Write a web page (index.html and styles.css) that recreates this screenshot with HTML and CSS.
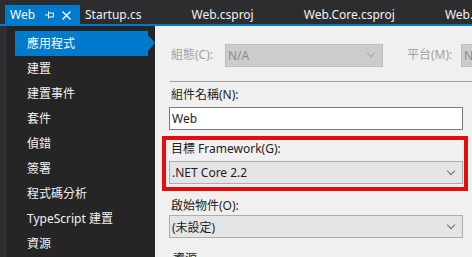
FILE: index.html
```html
<!DOCTYPE html>
<html lang="zh-Hant">
<head>
<meta charset="utf-8">
<title>Web 屬性</title>
<link rel="stylesheet" href="styles.css">
</head>
<body>
<div class="window">
  <div class="tabbar">
    <div class="tab active">
      <span class="tab-title">Web</span>
      <svg class="pin" width="9" height="8" viewBox="0 0 9 8"><path d="M0 4H3.5M3.5 0.5V7.5M3.5 2H8.5V6H3.5" fill="none" stroke="#fff" stroke-width="1"/></svg>
      <svg class="close" width="9" height="9" viewBox="0 0 9 9"><path d="M0.5 0.5L8.5 8.5M8.5 0.5L0.5 8.5" fill="none" stroke="#fff" stroke-width="1.4"/></svg>
    </div>
    <div class="tab">Startup.cs</div>
    <div class="tab">Web.csproj</div>
    <div class="tab">Web.Core.csproj</div>
    <div class="tab">Web.Core.csproj</div>
  </div>
  <div class="main">
    <nav class="sidebar">
      <div class="nav-item selected">應用程式</div>
      <div class="nav-item">建置</div>
      <div class="nav-item">建置事件</div>
      <div class="nav-item">套件</div>
      <div class="nav-item">偵錯</div>
      <div class="nav-item">簽署</div>
      <div class="nav-item">程式碼分析</div>
      <div class="nav-item">TypeScript 建置</div>
      <div class="nav-item">資源</div>
    </nav>
    <section class="panel">
      <div class="config-row">
        <span class="label disabled cfg-label">組態(C):</span>
        <div class="select disabled cfg-select"><span>N/A</span><i class="chev"></i></div>
        <span class="label disabled plat-label">平台(M):</span>
        <div class="select disabled plat-select"><span>N/A</span></div>
      </div>
      <div class="separator"></div>
      <div class="label field-label">組件名稱(N):</div>
      <div class="textbox">Web</div>
      <div class="highlight">
        <div class="label hl-label">目標 Framework(G):</div>
        <div class="select"><span>.NET Core 2.2</span><i class="chev"></i></div>
      </div>
      <div class="label field-label startup-label">啟始物件(O):</div>
      <div class="select"><span>(未設定)</span><i class="chev"></i></div>
      <div class="group">
        <span class="group-line"></span>
        <span class="group-title">資源</span>
      </div>
    </section>
  </div>
</div>
</body>
</html>
```

FILE: styles.css
```css
* { box-sizing: border-box; }
html, body { margin: 0; padding: 0; }
body {
  width: 472px;
  height: 257px;
  overflow: hidden;
  background: #2d2d30;
  font-family: "Noto Sans", "Noto Sans CJK TC", sans-serif;
  font-size: 12px;
}
.window { display: flex; flex-direction: column; height: 257px; }

.tabbar {
  display: flex;
  align-items: flex-end;
  height: 26px;
  padding-left: 5px;
  border-bottom: 2px solid #007acc;
  white-space: nowrap;
  overflow: hidden;
  flex: none;
}
.tab {
  height: 19px;
  line-height: 19px;
  color: #f1f1f1;
  padding: 0 45px 0 5px;
  font-size: 12px;
  flex: none;
}
.tab.active {
  background: #007acc;
  color: #fff;
  display: flex;
  align-items: center;
  width: 75px;
  padding: 0 0 0 5px;
}
.tab-title { margin-right: 10px; }
.pin { margin-right: 8px; margin-top: 1px; }
.close { margin-top: 1px; }

.main { display: flex; flex: 1; min-height: 0; }

.sidebar {
  width: 150px;
  flex: none;
  background: #252526;
  border-left: 1px solid #3a3a3e;
  margin-left: 5px;
  padding: 5px 0 0 9px;
}
.nav-item {
  height: 25px;
  line-height: 25px;
  padding-left: 12px;
  color: #f1f1f1;
  font-size: 12px;
  position: relative;
  width: 133px;
  white-space: nowrap;
}
.nav-item.selected { background: #007acc; color: #fff; }
.nav-item.selected::after {
  content: "";
  position: absolute;
  right: -7px;
  top: 4px;
  border-left: 7px solid #007acc;
  border-top: 8px solid transparent;
  border-bottom: 8px solid transparent;
}

.panel {
  flex: 1;
  background: #f0f0f0;
  padding: 17px 9px 0 14px;
  color: #1e1e1e;
  overflow: hidden;
}
.label { line-height: 18px; padding-left: 2px; }
.disabled { color: #a2a2a2; }

.config-row {
  display: flex;
  align-items: center;
  height: 24px;
  white-space: nowrap;
}
.cfg-label { width: 56px; flex: none; }
.cfg-select { width: 158px; flex: none; height: 24px; }
.plat-label { margin-left: 22px; width: 56px; flex: none; }
.plat-select { width: 40px; flex: none; height: 24px; }

.select {
  display: flex;
  align-items: center;
  justify-content: space-between;
  height: 23px;
  background: #e5e5e5;
  border: 1px solid #adadad;
  padding: 0 8px 0 2px;
}
.select.disabled {
  background: #cccccc;
  border-color: #bfbfbf;
  color: #8d8d8d;
}
.chev {
  width: 6px;
  height: 6px;
  border-right: 1px solid #6d6d6d;
  border-bottom: 1px solid #6d6d6d;
  transform: rotate(45deg);
  margin-top: -4px;
}
.select.disabled .chev { border-color: #a8a8a8; }

.separator {
  height: 1px;
  background: #a0a0a0;
  margin: 14px -9px 0 1px;
}
.field-label { margin-top: 4px; margin-bottom: 3px; }
.textbox {
  height: 23px;
  line-height: 21px;
  background: #fff;
  border: 1px solid #7a7a7a;
  padding-left: 2px;
}
.highlight {
  margin: 6px -5px 0 -7px;
  border: 4px solid #e50d0d;
  padding: 0 1px 3px 3px;
}
.hl-label { margin-bottom: 3px; }
.startup-label { margin-top: 6px; margin-bottom: 0; }

.group {
  display: flex;
  align-items: center;
  margin-top: 12px;
  margin-left: 1px;
  height: 18px;
}
.group-line { width: 2px; height: 1px; background: #c0c0c0; }
.group-title { margin-left: 1px; line-height: 18px; }
```
